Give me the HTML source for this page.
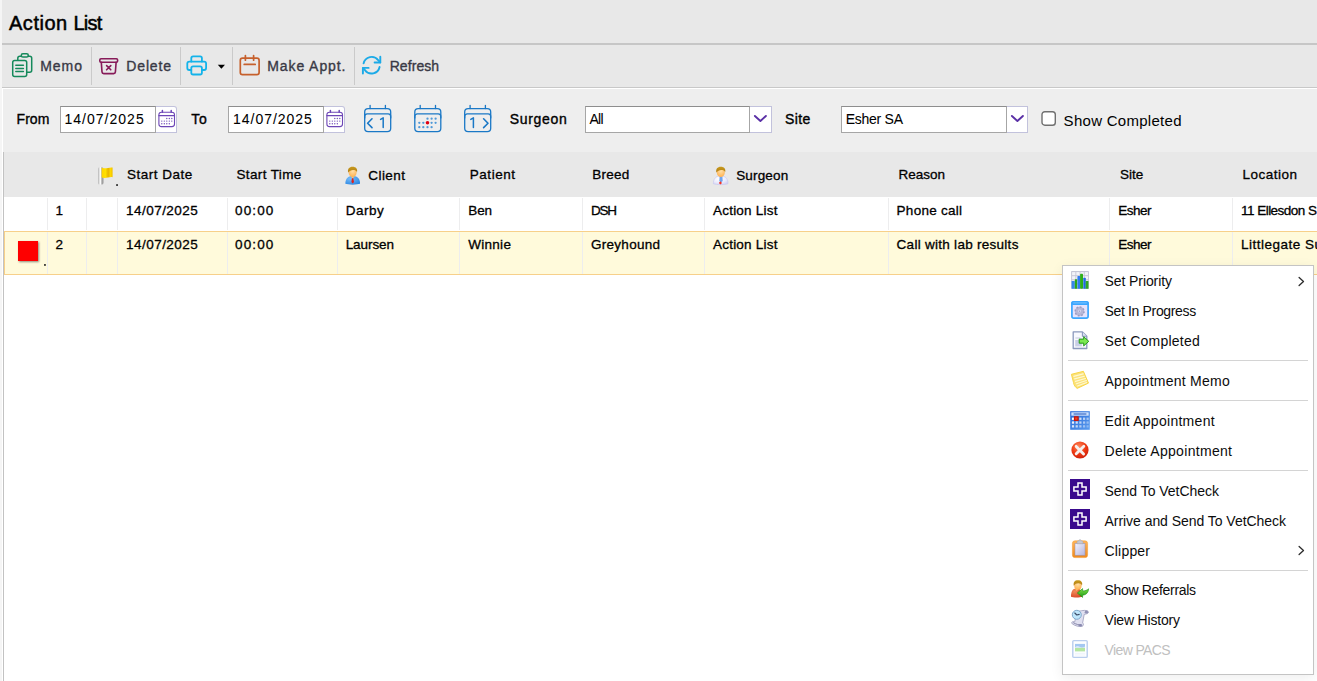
<!DOCTYPE html>
<html lang="en"><head><meta charset="utf-8"><title>Action List</title>
<style>
html,body{margin:0;padding:0}
body{width:1317px;height:681px;overflow:hidden;position:relative;background:#f5f5f5;font-family:"Liberation Sans",sans-serif;color:#000}
.a{position:absolute}
.t{position:absolute;white-space:nowrap;line-height:1;color:#000}
.ttl{-webkit-text-stroke:.5px #000}
.tb{color:#393945;-webkit-text-stroke:.35px #393945}
.lb{-webkit-text-stroke:.35px #000}
.in{-webkit-text-stroke:.05px #000}
.th,.td{-webkit-text-stroke:.3px #000}
.mi{color:#0c0c0c}
.dis{color:#c0c0c0}
#title{left:2px;top:0;width:1315px;height:43px;background:#e8e8e8}
#l1{left:2px;top:43px;width:1315px;height:2px;background:#c6c6c6}
#tbar{left:2px;top:45px;width:1315px;height:42px;background:#e8e8e8}
#l2{left:2px;top:87px;width:1315px;height:1px;background:#c8c8c8}
#wl{left:2px;top:88px;width:1315px;height:593px;background:#fff}
#filt{left:3px;top:89px;width:1314px;height:63px;background:#eeeeee}
#vline{left:3px;top:152px;width:1px;height:529px;background:#c2c2c2}
#grid{left:4px;top:152px;width:1313px;height:529px;background:#fff}
#hdr{left:4px;top:152px;width:1313px;height:45px;background:#e8e8e8}
#sel{left:4px;top:231px;width:1312px;height:42px;background:#fffadb;border:1px solid #f7d08a;border-right:none}
.sep{position:absolute;top:47px;width:1px;height:38px;background:#cacaca}
.cb{position:absolute;width:1px;background:#ededee}
.inp{position:absolute;top:106px;height:25px;background:#fff;border:1px solid #a6a6a6;border-top-color:#8e8e8e;box-sizing:content-box}
.btn{position:absolute;top:106px;height:25px;border:1px solid #c2c2dc;border-left:none;box-sizing:content-box}
#menu{left:1062px;top:265px;width:250px;height:408px;background:#fff;border:1px solid #c4c4c4;box-shadow:0 3px 12px rgba(0,0,0,.07)}
.ms{position:absolute;left:1068px;width:240px;height:1px;background:#d4d4d4}
svg{position:absolute;overflow:visible}

</style></head><body>
<div id="title" class="a"></div>
<div id="l1" class="a"></div>
<div id="tbar" class="a"></div>
<div id="l2" class="a"></div>
<div id="wl" class="a"></div>
<div id="filt" class="a"></div>
<div id="grid" class="a"></div>
<div id="hdr" class="a"></div>
<div id="sel" class="a"></div>
<div id="vline" class="a"></div>
<div class="sep" style="left:91px"></div>
<div class="sep" style="left:180px"></div>
<div class="sep" style="left:232px"></div>
<div class="sep" style="left:354px"></div>
<!-- column borders -->
<div class="cb" style="left:47px;top:198px;height:32px"></div>
<div class="cb" style="left:86px;top:198px;height:32px"></div>
<div class="cb" style="left:117px;top:198px;height:32px"></div>
<div class="cb" style="left:227px;top:198px;height:32px"></div>
<div class="cb" style="left:337px;top:198px;height:32px"></div>
<div class="cb" style="left:459px;top:198px;height:32px"></div>
<div class="cb" style="left:582px;top:198px;height:32px"></div>
<div class="cb" style="left:704px;top:198px;height:32px"></div>
<div class="cb" style="left:888px;top:198px;height:32px"></div>
<div class="cb" style="left:1109px;top:198px;height:32px"></div>
<div class="cb" style="left:1232px;top:198px;height:32px"></div>
<div class="cb" style="left:47px;top:232px;height:42px"></div>
<div class="cb" style="left:86px;top:232px;height:42px"></div>
<div class="cb" style="left:117px;top:232px;height:42px"></div>
<div class="cb" style="left:227px;top:232px;height:42px"></div>
<div class="cb" style="left:337px;top:232px;height:42px"></div>
<div class="cb" style="left:459px;top:232px;height:42px"></div>
<div class="cb" style="left:582px;top:232px;height:42px"></div>
<div class="cb" style="left:704px;top:232px;height:42px"></div>
<div class="cb" style="left:888px;top:232px;height:42px"></div>
<div class="cb" style="left:1109px;top:232px;height:42px"></div>
<div class="cb" style="left:1232px;top:232px;height:42px"></div>
<!-- red square -->
<div class="a" style="left:18px;top:241px;width:20px;height:20px;background:#fe0000;box-shadow:1px 1px 2px rgba(0,0,0,.45)"></div>
<svg style="left:43px;top:263px" width="4" height="4"><rect x="1.1" y="1.1" width="1.7" height="1.7" fill="#1a1a1a"/></svg>
<svg style="left:115px;top:183px" width="4" height="4"><rect x="1.2" y="1.2" width="1.7" height="1.7" fill="#1a1a1a"/></svg>
<!-- inputs -->
<div class="inp" style="left:60px;width:94px"></div>
<div class="btn" style="left:156px;width:20px;background:#fff;border-top-right-radius:3px"></div>
<div class="inp" style="left:228px;width:94px"></div>
<div class="btn" style="left:324px;width:20px;background:#fff;border-top-right-radius:3px"></div>
<div class="inp" style="left:585px;width:163px"></div>
<div class="btn" style="left:750px;width:20.5px;background:#fff"></div>
<div class="inp" style="left:841px;width:164px"></div>
<div class="btn" style="left:1007px;width:20px;background:#fff"></div>
<svg style="left:1040px;top:110px" width="18" height="18" viewBox="0 0 18 18"><rect x="2" y="1.7" width="13.3" height="13.5" rx="2.8" fill="#fff" stroke="#707070" stroke-width="1.4"/></svg>
<!-- menu -->
<div id="menu" class="a"></div>
<div class="ms" style="top:360px"></div>
<div class="ms" style="top:400px"></div>
<div class="ms" style="top:470px"></div>
<div class="ms" style="top:570px"></div>
<!-- toolbar icons -->
<svg style="left:11px;top:52px" width="23" height="26" viewBox="11 52 23 26" fill="none" stroke="#15895b" stroke-width="1.5" stroke-linejoin="round" stroke-linecap="round">
<path d="M21.5 56.2h-1.7a2 2 0 0 0-2 2v1.6M28 56.2h1.7a2 2 0 0 1 2 2v12a2 2 0 0 1-2 2h-2.5"/>
<rect x="21.3" y="53.7" width="7" height="3.4" rx="1.6"/>
<rect x="12.7" y="60.5" width="14" height="16" rx="2"/>
<path d="M15.8 65.3h7.6M15.8 68.5h7.6M15.8 71.6h7.6"/>
</svg>
<svg style="left:98px;top:56px" width="22" height="20" viewBox="98 56 22 20" fill="none" stroke="#871b59" stroke-width="1.6" stroke-linejoin="round" stroke-linecap="round">
<rect x="99.8" y="58.8" width="17.8" height="3.4" rx="1.2"/>
<path d="M101.3 62.4l.7 9.5a1.8 1.8 0 0 0 1.8 1.7h9.8a1.8 1.8 0 0 0 1.8-1.7l.7-9.5"/>
<path d="M106.6 65.6l4.2 4.2M110.8 65.6l-4.2 4.2"/>
</svg>
<svg style="left:185px;top:54px" width="24" height="23" viewBox="185 54 24 23" fill="none" stroke="#14b3ea" stroke-width="1.8" stroke-linejoin="round" stroke-linecap="round">
<path d="M191.3 61.6v-3.4a1.8 1.8 0 0 1 1.8-1.8h7a1.8 1.8 0 0 1 1.8 1.8v3.4"/>
<path d="M191.3 70h-2a2 2 0 0 1-2-2v-4.4a2 2 0 0 1 2-2h14.8a2 2 0 0 1 2 2v4.4a2 2 0 0 1-2 2h-2"/>
<rect x="191.3" y="66.3" width="10.6" height="8.2" rx="1.8"/>
</svg>
<svg style="left:217px;top:64px" width="9" height="6" viewBox="0 0 9 6"><path d="M.8.8h7.2L4.4 4.8z" fill="#000"/></svg>
<svg style="left:238px;top:54px" width="23" height="23" viewBox="238 54 23 23" fill="none" stroke="#c6602c" stroke-width="1.7" stroke-linejoin="round" stroke-linecap="round">
<rect x="240.3" y="58.2" width="18.8" height="16.4" rx="2.2"/>
<path d="M245.4 55.6v4.6M253.6 55.6v4.6M244.2 64.4h11"/>
</svg>
<svg style="left:361px;top:55px" width="21" height="21" viewBox="361 55 21 21" fill="none" stroke="#1caae7" stroke-width="1.9" stroke-linejoin="round" stroke-linecap="round">
<path d="M363.6 63.4a8.2 8.2 0 0 1 14.6-3.2l2 2.2"/>
<path d="M380.3 56.8v5.7h-5.7"/>
<path d="M379.6 67a8.2 8.2 0 0 1-14.6 3.2l-2-2.2"/>
<path d="M362.9 73.6v-5.7h5.7"/>
</svg>
<!-- small purple calendars -->
<svg style="left:158px;top:109.7px" width="18" height="18" viewBox="0 0 18 18" fill="none" stroke="#6d46b6" stroke-width="1.1" stroke-linecap="round">
<rect x=".9" y="2.2" width="15.6" height="14.4" rx="2.6"/><path d="M.9 5.6h15.6" stroke-width="1.2"/><path d="M4.4.6v1.6M13.2.6v1.6" stroke-width="1.5"/>
<path d="M3.8 11.1h0M6.3 11.1h0M8.8 11.1h0M11.3 11.1h0M13.8 11.1h0M3.8 13.7h0M6.3 13.7h0M8.8 13.7h0M11.3 13.7h0M8.8 8.5h0M11.3 8.5h0M13.8 8.5h0" stroke-width="1.35"/>
</svg>
<svg style="left:326.3px;top:109.7px" width="18" height="18" viewBox="0 0 18 18" fill="none" stroke="#6d46b6" stroke-width="1.1" stroke-linecap="round">
<rect x=".9" y="2.2" width="15.6" height="14.4" rx="2.6"/><path d="M.9 5.6h15.6" stroke-width="1.2"/><path d="M4.4.6v1.6M13.2.6v1.6" stroke-width="1.5"/>
<path d="M3.8 11.1h0M6.3 11.1h0M8.8 11.1h0M11.3 11.1h0M13.8 11.1h0M3.8 13.7h0M6.3 13.7h0M8.8 13.7h0M11.3 13.7h0M8.8 8.5h0M11.3 8.5h0M13.8 8.5h0" stroke-width="1.35"/>
</svg>
<!-- nav calendars -->
<svg style="left:363px;top:104px" width="30" height="29" viewBox="363 104 30 29" fill="none" stroke="#1a78c6" stroke-width="1.3" stroke-linecap="round" stroke-linejoin="round">
<rect x="364.7" y="108.6" width="26" height="23" rx="3.4"/><path d="M364.7 117.9v-1.4a2.6 2.6 0 0 1 2.6-2.6h20.8a2.6 2.6 0 0 1 2.6 2.6v1.4M370.1 105.3v3.3M385.4 105.3v3.3"/>
<path d="M372 118.8l-4.4 4.4 4.4 4.4" stroke-width="1.6"/><path d="M380.6 119.4l2.6-1.6v9.8" stroke-width="1.5"/>
</svg>
<svg style="left:413px;top:104px" width="30" height="29" viewBox="413 104 30 29" fill="none" stroke="#1a78c6" stroke-width="1.3" stroke-linecap="round" stroke-linejoin="round">
<rect x="414.8" y="108.6" width="26" height="23" rx="3.4"/><path d="M414.8 117.9v-1.4a2.6 2.6 0 0 1 2.6-2.6h20.8a2.6 2.6 0 0 1 2.6 2.6v1.4M420.2 105.3v3.3M435.5 105.3v3.3"/>
<g stroke="none" fill="#4f99d8"><circle cx="427.5" cy="118.7" r="1.15"/><circle cx="431.6" cy="118.7" r="1.15"/><circle cx="435.6" cy="118.7" r="1.15"/>
<circle cx="419.3" cy="122.8" r="1.15"/><circle cx="423.3" cy="122.8" r="1.15"/><circle cx="431.6" cy="122.8" r="1.15"/><circle cx="435.6" cy="122.8" r="1.15"/>
<circle cx="419.3" cy="127.2" r="1.15"/><circle cx="423.3" cy="127.2" r="1.15"/><circle cx="427.5" cy="127.2" r="1.15"/><circle cx="431.6" cy="127.2" r="1.15"/>
<circle cx="427.5" cy="122.8" r="1.8" fill="#e00012"/></g>
</svg>
<svg style="left:463px;top:104px" width="30" height="29" viewBox="463 104 30 29" fill="none" stroke="#1a78c6" stroke-width="1.3" stroke-linecap="round" stroke-linejoin="round">
<rect x="464.7" y="108.6" width="26" height="23" rx="3.4"/><path d="M464.7 117.9v-1.4a2.6 2.6 0 0 1 2.6-2.6h20.8a2.6 2.6 0 0 1 2.6 2.6v1.4M470.1 105.3v3.3M485.4 105.3v3.3"/>
<path d="M483.6 118.8l4.4 4.4-4.4 4.4" stroke-width="1.6"/><path d="M470.8 119.4l2.6-1.6v9.8" stroke-width="1.5"/>
</svg>
<!-- combo chevrons -->
<svg style="left:753px;top:114px" width="15" height="9" viewBox="0 0 15 9" fill="none" stroke="#5a30a6" stroke-width="1.9" stroke-linecap="round" stroke-linejoin="round"><path d="M1.9 2l5.5 5 5.5-5"/></svg>
<svg style="left:1010px;top:114px" width="15" height="9" viewBox="0 0 15 9" fill="none" stroke="#5a30a6" stroke-width="1.9" stroke-linecap="round" stroke-linejoin="round"><path d="M1.9 2l5.5 5 5.5-5"/></svg>
<svg width="0" height="0" style="left:0;top:0"><defs>
<linearGradient id="gPole" x1="0" x2="1" y1="0" y2="0"><stop offset="0" stop-color="#b4b4b4"/><stop offset=".25" stop-color="#dedede"/><stop offset=".45" stop-color="#ffffff"/><stop offset=".62" stop-color="#c4c4c4"/><stop offset="1" stop-color="#858585"/></linearGradient>
<linearGradient id="gFlag" x1="0" x2="1" y1="0" y2="0"><stop offset="0" stop-color="#ffd200"/><stop offset=".35" stop-color="#ffe100"/><stop offset=".6" stop-color="#e8b400"/><stop offset=".8" stop-color="#ffd800"/><stop offset="1" stop-color="#f0c000"/></linearGradient>
<radialGradient id="gFace" cx=".5" cy=".35" r=".7"><stop offset="0" stop-color="#ffe0a8"/><stop offset="1" stop-color="#ffae4a"/></radialGradient>
<linearGradient id="gHair" x1="0" x2="0" y1="0" y2="1"><stop offset="0" stop-color="#c89a1e"/><stop offset="1" stop-color="#b07d12"/></linearGradient>
<radialGradient id="gBlue" cx=".35" cy=".3" r=".9"><stop offset="0" stop-color="#78bcf8"/><stop offset="1" stop-color="#1f7fe0"/></radialGradient>
<radialGradient id="gCoat" cx=".4" cy=".3" r=".9"><stop offset="0" stop-color="#ffffff"/><stop offset=".5" stop-color="#ececfc"/><stop offset="1" stop-color="#c4c4f0"/></radialGradient>
<radialGradient id="gRed" cx=".4" cy=".3" r=".8"><stop offset="0" stop-color="#ff7a5a"/><stop offset=".6" stop-color="#e8231a"/><stop offset="1" stop-color="#b80d0d"/></radialGradient>
<linearGradient id="gOrange" x1="0" x2="0" y1="0" y2="1"><stop offset="0" stop-color="#ffb65c"/><stop offset="1" stop-color="#f08a1e"/></linearGradient>
<linearGradient id="gPaper" x1="0" x2="1" y1="0" y2="1"><stop offset="0" stop-color="#f4f4ff"/><stop offset="1" stop-color="#b4b4dc"/></linearGradient>
<linearGradient id="gGreen" x1="0" x2="0" y1="0" y2="1"><stop offset="0" stop-color="#7fe04a"/><stop offset="1" stop-color="#1e9a14"/></linearGradient>
<radialGradient id="gBody2" cx=".35" cy=".3" r=".9"><stop offset="0" stop-color="#f08a58"/><stop offset="1" stop-color="#d43a1e"/></radialGradient>
</defs></svg>
<!-- flag -->
<svg style="left:97px;top:166px" width="18" height="20" viewBox="97 166 18 20">
<rect x="98" y="167.3" width="5.4" height="17.3" rx="1.6" fill="url(#gPole)"/>
<path d="M101.6 167.8c2.5.7 4.5.6 6.4.2 1.7-.4 3.2-.7 4.6-.4v9.6c-1.4-.3-2.9 0-4.6.4-1.9.4-3.9.7-6.4 0z" fill="url(#gFlag)"/>
</svg>
<!-- client -->
<svg style="left:344px;top:166px" width="18" height="20" viewBox="344 166 18 20">
<path d="M345.4 183.8c-.3-4.2 2.2-7.2 5-7.6h4.6c2.8.4 5.3 3.4 5 7.6-2.4 1.1-12.2 1.1-14.6 0z" fill="url(#gBlue)"/>
<path d="M350.9 176.4l1.7 2.4 1.8-2.4z" fill="#ffc070"/>
<path d="M352 178.2h1.3l.7 3.7-1.3 1.7-1.3-1.7z" fill="#e0201c"/>
<ellipse cx="352.6" cy="172.4" rx="4" ry="4.6" fill="url(#gFace)"/>
<path d="M348.2 172.6c-.9-3.6 1-5.9 4.4-5.9 3.3 0 5.2 2.2 4.4 5.3-.8-1.6-2.2-2.2-4-2.1-1.9 0-3.6.8-4.8 2.7z" fill="url(#gHair)"/>
</svg>
<!-- surgeon -->
<svg style="left:712px;top:166px" width="18" height="20" viewBox="712 166 18 20">
<path d="M713.4 183.8c-.3-4.2 2.2-7.2 5-7.6h4.6c2.8.4 5.3 3.4 5 7.6-2.4 1.1-12.2 1.1-14.6 0z" fill="url(#gCoat)" stroke="#c6c6ec" stroke-width=".6"/>
<path d="M719.6 176.6h2.8l.3 4.4-1.7 1.4-1.7-1.4z" fill="#6fa4ee"/>
<path d="M720.4 181.3l1.6 1.6-1.6 1.6-1.6-1.6z" fill="#f03428"/>
<ellipse cx="720.8" cy="172.4" rx="4" ry="4.6" fill="url(#gFace)"/>
<path d="M716.4 172.6c-.9-3.6 1-5.9 4.4-5.9 3.3 0 5.2 2.2 4.4 5.3-.8-1.6-2.2-2.2-4-2.1-1.9 0-3.6.8-4.8 2.7z" fill="url(#gHair)"/>
</svg>
<!-- menu: chart -->
<svg style="left:1071px;top:271px" width="18" height="18" viewBox="0 0 18 18">
<rect x=".1" y=".1" width="17.8" height="17.8" rx=".6" fill="#c6c6d6"/>
<g fill="#f3f3f9"><rect x="1.1" y="1.1" width="3.3" height="3.1"/><rect x="5.3" y="1.1" width="3.3" height="3.1"/><rect x="9.5" y="1.1" width="3.3" height="3.1"/><rect x="13.7" y="1.1" width="3.3" height="3.1"/><rect x="1.1" y="5.2" width="3.3" height="3.1"/><rect x="5.3" y="5.2" width="3.3" height="3.1"/><rect x="9.5" y="5.2" width="3.3" height="3.1"/><rect x="13.7" y="5.2" width="3.3" height="3.1"/><rect x="1.1" y="9.3" width="3.3" height="3.1"/><rect x="5.3" y="9.3" width="3.3" height="3.1"/><rect x="9.5" y="9.3" width="3.3" height="3.1"/><rect x="13.7" y="9.3" width="3.3" height="3.1"/><rect x="1.1" y="13.4" width="3.3" height="3.1"/><rect x="5.3" y="13.4" width="3.3" height="3.1"/><rect x="9.5" y="13.4" width="3.3" height="3.1"/><rect x="13.7" y="13.4" width="3.3" height="3.1"/></g>
<rect x=".6" y="10" width="3.2" height="7.8" rx=".6" fill="#3586ea"/><rect x="3.8" y="8.3" width="2.4" height="9.5" rx=".6" fill="#2aa617"/>
<rect x="6.4" y="5.1" width="2.8" height="12.7" rx=".6" fill="#2f7df0"/><rect x="9.1" y="2.8" width="2.9" height="15" rx=".8" fill="#2fb019"/>
<rect x="12.3" y="6.7" width="2.5" height="11.1" rx=".6" fill="#1f6ae0"/><rect x="14.7" y="9.9" width="2.8" height="7.9" rx=".6" fill="#30a822"/>
</svg>
<!-- menu: in progress -->
<svg style="left:1071px;top:301px" width="18" height="18" viewBox="0 0 18 18">
<rect x=".9" y=".9" width="16.2" height="16.2" rx="1.8" fill="#e6e3fc" stroke="#3ba6ff" stroke-width="1.7"/>
<rect x=".2" y=".2" width="17.6" height="3.8" rx="1.6" fill="#3ba6ff"/><path d="M2.2 1.9h13.6" stroke="#7cc4ff" stroke-width="1"/>
<circle cx="8.6" cy="10.4" r="4.7" fill="#b6b6d6"/><circle cx="8.6" cy="10.4" r="4.4" fill="none" stroke="#9c9cc2" stroke-width="1.5" stroke-dasharray="1.7 1.7"/><circle cx="8.6" cy="10" r="1.5" fill="#d8d8f0"/><circle cx="8.6" cy="10.2" r=".6" fill="#8c8cb8"/>
</svg>
<!-- menu: completed -->
<svg style="left:1072px;top:331px" width="18" height="19" viewBox="0 0 18 19">
<path d="M1.2.9h9.2l4.4 4.4v12.2h-13.6z" fill="#f8f9fe" stroke="#8b99bd" stroke-width="1.3" stroke-linejoin="round"/>
<path d="M10.4.9v4.4h4.4" fill="#dde3f3" stroke="#8b99bd" stroke-width="1.1" stroke-linejoin="round"/>
<path d="M3.4 7h5" stroke="#c4c8e0" stroke-width="1"/>
<rect x="3.2" y="9" width="6.6" height="6.4" fill="#c9cfe6"/>
<path d="M7.2 8.1h4.5V5.7l5.1 4.6-5.1 4.6v-2.7H7.2z" fill="#7be852" stroke="#18900e" stroke-width=".9" stroke-linejoin="round"/>
</svg>
<!-- menu: memo note -->
<svg style="left:1070px;top:370px" width="20" height="20" viewBox="0 0 20 20">
<path d="M1.4 4.3L13.4 1.3 18.5 13.1 7.2 18.4C5.2 17.2 3.8 15 3.5 12.6z" fill="#fbe27a" stroke="#f7d23c" stroke-width=".9" stroke-linejoin="round"/>
<path d="M3.8 6.4l9.4-2.5M4.6 8.9l9.8-2.7M5.4 11.4l10-2.9M6.4 13.8l10-3.2M7.6 16l9-3.4" stroke="#fef8d2" stroke-width="1.1" fill="none" stroke-linecap="round"/>
</svg>
<!-- menu: edit calendar -->
<svg style="left:1070px;top:411px" width="20" height="19" viewBox="0 0 20 19">
<defs><linearGradient id="gCal" x1="0" y1="0" x2="1" y2="1"><stop offset="0" stop-color="#2465d4"/><stop offset="1" stop-color="#5b9df0"/></linearGradient></defs>
<rect x=".2" y=".2" width="19.6" height="18.6" fill="url(#gCal)"/>
<rect x="1.3" y="1.3" width="17.4" height="3.4" fill="#cfe1fb"/><path d="M3.6 3h12.8" stroke="#2f62c4" stroke-width="1.1"/>
<g fill="#fff"><rect x="1.9" y="6.6" width="2.2" height="2.3" opacity="1.00"/><rect x="9.3" y="6.6" width="2.2" height="2.3" opacity="0.76"/><rect x="13" y="6.6" width="2.2" height="2.3" opacity="0.64"/><rect x="16.5" y="6.6" width="2.2" height="2.3" opacity="0.52"/><rect x="1.9" y="10.4" width="2.2" height="2.3" opacity="0.90"/><rect x="5.6" y="10.4" width="2.2" height="2.3" opacity="0.78"/><rect x="9.3" y="10.4" width="2.2" height="2.3" opacity="0.66"/><rect x="13" y="10.4" width="2.2" height="2.3" opacity="0.54"/><rect x="16.5" y="10.4" width="2.2" height="2.3" opacity="0.42"/><rect x="1.9" y="14.2" width="2.2" height="2.3" opacity="0.80"/><rect x="5.6" y="14.2" width="2.2" height="2.3" opacity="0.68"/><rect x="9.3" y="14.2" width="2.2" height="2.3" opacity="0.56"/><rect x="13" y="14.2" width="2.2" height="2.3" opacity="0.44"/><rect x="16.5" y="14.2" width="2.2" height="2.3" opacity="0.32"/></g>
<rect x="3.9" y="5.2" width="4.8" height="4.8" fill="#c81408"/><rect x="5.2" y="6.5" width="2.2" height="2.2" fill="#f2421c"/>
</svg>
<!-- menu: delete -->
<svg style="left:1071px;top:441px" width="18" height="18" viewBox="0 0 18 18">
<defs><radialGradient id="gRed2" cx=".42" cy=".3" r=".75"><stop offset="0" stop-color="#ff8a5e"/><stop offset=".55" stop-color="#ee3a12"/><stop offset="1" stop-color="#cc1c08"/></radialGradient></defs>
<circle cx="9" cy="9" r="8.6" fill="url(#gRed2)"/>
<path d="M5.2 5.4l7.4 7.6M12.8 5.2l-7.6 7.6" stroke="#f6f0ee" stroke-width="2.9" stroke-linecap="round"/>
</svg>
<!-- menu: vetcheck x2 -->
<svg style="left:1070px;top:479px" width="20" height="20" viewBox="0 0 20 20">
<rect width="20" height="20" fill="#3a0a8e"/>
<path d="M8 3.9h4v4.1h4.1v4h-4.1v4.1h-4v-4.1h-4.1v-4h4.1z" fill="none" stroke="#fff" stroke-width="1.5"/>
</svg>
<svg style="left:1070px;top:509px" width="20" height="20" viewBox="0 0 20 20">
<rect width="20" height="20" fill="#3a0a8e"/>
<path d="M8 3.9h4v4.1h4.1v4h-4.1v4.1h-4v-4.1h-4.1v-4h4.1z" fill="none" stroke="#fff" stroke-width="1.5"/>
</svg>
<!-- menu: clipper -->
<svg style="left:1072px;top:539px" width="16" height="19" viewBox="0 0 16 19">
<rect x=".4" y="1.8" width="15.2" height="16.8" rx="2.6" fill="url(#gOrange)" stroke="#f0982e" stroke-width=".5"/>
<rect x="3" y="4.4" width="10" height="11.8" fill="url(#gPaper)" stroke="#9090b4" stroke-width=".5"/>
<path d="M5 4.8V2.9c0-.6.4-1 1-1h.9c.1-.9.6-1.4 1.1-1.4s1 .5 1.1 1.4H10c.6 0 1 .4 1 1v1.9z" fill="#c8c8d0" stroke="#9a9aa6" stroke-width=".4"/>
</svg>
<!-- menu: referrals -->
<svg style="left:1071px;top:580px" width="19" height="18" viewBox="0 0 19 18">
<path d="M0 16.8c-.2-4.4 1.4-7.6 3.8-8h3.6c2.4.4 3.8 3.6 3.6 8-1.8 1-9.2 1-11 0z" fill="url(#gBody2)"/>
<path d="M4.2 8.9l1.6 2 1.6-2z" fill="#ffc070"/>
<ellipse cx="6.9" cy="5.4" rx="3.7" ry="4.3" fill="url(#gFace)"/>
<path d="M2.8 5.8c-.8-3.6.9-5.6 4.1-5.6s5 2 4.1 5.2c-.7-1.4-2-2.2-3.8-2.1-1.8 0-3.3.8-4.4 2.5z" fill="url(#gHair)"/>
<path d="M6.3 13l5.3-4.4v2.3c2.4.1 4.4-.6 6-2.1-.2 3.6-2.2 6.2-6 6.4v2.2z" fill="url(#gGreen)" stroke="#17920f" stroke-width=".6" stroke-linejoin="round"/>
</svg>
<!-- menu: history -->
<svg style="left:1071px;top:609px" width="19" height="19" viewBox="0 0 19 19">
<path d="M5.4 3.2c3-1.4 7.8-2.2 10.6-1.6 1.6.4 1.8 2.4.4 3l-3.2.8-1.6 8.6c1.2.6 1.2 2.8-.6 3.4-2.8.6-7.2-.6-9.8-2.6-1-.8-.4-2.2 1-2.2l1.6.2z" fill="#e0e0f0" stroke="#9a9aba" stroke-width=".8"/>
<path d="M2.2 13.6c2.6 1.6 6 2.6 8.8 2.4" stroke="#7e7ea2" stroke-width=".9" fill="none"/>
<ellipse cx="15.4" cy="3.2" rx="1.7" ry="1.4" fill="#9292b6"/><ellipse cx="9.2" cy="16.2" rx="1.6" ry="1.3" fill="#8a8ab0"/>
<circle cx="5.8" cy="5.8" r="4.5" fill="#bfe6fb" stroke="#7fa8cc" stroke-width="1"/>
<path d="M3.8 4l2 2 2.4-.6" stroke="#3a4a66" stroke-width="1.1" fill="none" stroke-linecap="round" stroke-linejoin="round"/>
</svg>
<!-- menu: PACS (disabled) -->
<svg style="left:1072px;top:640px" width="16" height="18" viewBox="0 0 16 18">
<rect x=".8" y=".6" width="14.4" height="16.8" rx="1" fill="#fdfeff" stroke="#b9cdee" stroke-width="1.4"/>
<rect x="3" y="3.9" width="10" height="4.2" fill="#a4c8f2"/><rect x="3" y="7.6" width="10" height="3.8" fill="#b4e6a2"/>
<path d="M3 7.2c1.6-1.4 3.2-1.5 4.6-.5s3 1.2 5.4-.2v1.6h-10z" fill="#dfeafa" opacity=".85"/>
<path d="M3 13.4h10M3 15h10" stroke="#e9f0fb" stroke-width=".7"/>
</svg>
<!-- submenu arrows -->
<svg style="left:1297px;top:276px" width="9" height="11" viewBox="0 0 9 11" fill="none" stroke="#2c2c2c" stroke-width="1.3" stroke-linecap="round" stroke-linejoin="round"><path d="M2.1 1.4l4.4 4.1-4.4 4.1"/></svg>
<svg style="left:1297px;top:545.1px" width="9" height="11" viewBox="0 0 9 11" fill="none" stroke="#2c2c2c" stroke-width="1.3" stroke-linecap="round" stroke-linejoin="round"><path d="M2.1 1.4l4.4 4.1-4.4 4.1"/></svg>

<span id="t0" class="t ttl" style="left:9.0px;top:13.07px;font-size:20px;letter-spacing:0.521px">Action</span>
<span id="t1" class="t ttl" style="left:73.4px;top:13.07px;font-size:20px;letter-spacing:-0.742px">List</span>
<span id="t2" class="t tb" style="left:40.2px;top:58.65px;font-size:14px;letter-spacing:0.965px">Memo</span>
<span id="t3" class="t tb" style="left:126.3px;top:58.65px;font-size:14px;letter-spacing:0.846px">Delete</span>
<span id="t4" class="t tb" style="left:267.2px;top:58.65px;font-size:14px;letter-spacing:0.917px">Make Appt.</span>
<span id="t5" class="t tb" style="left:389.7px;top:58.65px;font-size:14px;letter-spacing:0.061px">Refresh</span>
<span id="t6" class="t lb" style="left:16.5px;top:112.15px;font-size:14px;letter-spacing:0.076px">From</span>
<span id="t7" class="t lb" style="left:191.2px;top:112.15px;font-size:14px;letter-spacing:0.703px">To</span>
<span id="t8" class="t lb" style="left:509.7px;top:112.15px;font-size:14px;letter-spacing:0.677px">Surgeon</span>
<span id="t9" class="t lb" style="left:784.9px;top:112.15px;font-size:14px;letter-spacing:0.458px">Site</span>
<span id="t10" class="t ck" style="left:1063.6px;top:113.30px;font-size:15px;letter-spacing:0.282px">Show Completed</span>
<span id="t11" class="t in" style="left:64.5px;top:112.15px;font-size:14px;letter-spacing:1.014px">14/07/2025</span>
<span id="t12" class="t in" style="left:233.1px;top:112.15px;font-size:14px;letter-spacing:0.969px">14/07/2025</span>
<span id="t13" class="t in" style="left:589.4px;top:112.15px;font-size:14px;letter-spacing:-0.631px">All</span>
<span id="t14" class="t in" style="left:845.8px;top:112.15px;font-size:14px;letter-spacing:-0.277px">Esher SA</span>
<span id="t15" class="t th" style="left:127.0px;top:167.57px;font-size:13.5px;letter-spacing:0.502px">Start Date</span>
<span id="t16" class="t th" style="left:236.4px;top:167.57px;font-size:13.5px;letter-spacing:0.376px">Start Time</span>
<span id="t17" class="t th" style="left:368.3px;top:168.57px;font-size:13.5px;letter-spacing:0.417px">Client</span>
<span id="t18" class="t th" style="left:469.7px;top:167.57px;font-size:13.5px;letter-spacing:0.561px">Patient</span>
<span id="t19" class="t th" style="left:592.3px;top:167.57px;font-size:13.5px;letter-spacing:0.242px">Breed</span>
<span id="t20" class="t th" style="left:736.2px;top:168.57px;font-size:13.5px;letter-spacing:0.159px">Surgeon</span>
<span id="t21" class="t th" style="left:898.6px;top:167.57px;font-size:13.5px;letter-spacing:-0.029px">Reason</span>
<span id="t22" class="t th" style="left:1120.0px;top:167.57px;font-size:13.5px;letter-spacing:-0.022px">Site</span>
<span id="t23" class="t th" style="left:1242.4px;top:167.57px;font-size:13.5px;letter-spacing:0.508px">Location</span>
<span id="t24" class="t td" style="left:55.5px;top:203.57px;font-size:13.5px;letter-spacing:0.000px">1</span>
<span id="t25" class="t td" style="left:125.9px;top:203.57px;font-size:13.5px;letter-spacing:0.491px">14/07/2025</span>
<span id="t26" class="t td" style="left:235.0px;top:203.57px;font-size:13.5px;letter-spacing:1.126px">00:00</span>
<span id="t27" class="t td" style="left:345.7px;top:203.57px;font-size:13.5px;letter-spacing:0.496px">Darby</span>
<span id="t28" class="t td" style="left:468.3px;top:203.57px;font-size:13.5px;letter-spacing:-0.166px">Ben</span>
<span id="t29" class="t td" style="left:591.0px;top:203.57px;font-size:13.5px;letter-spacing:-1.258px">DSH</span>
<span id="t30" class="t td" style="left:713.0px;top:203.57px;font-size:13.5px;letter-spacing:0.212px">Action List</span>
<span id="t31" class="t td" style="left:896.6px;top:203.57px;font-size:13.5px;letter-spacing:0.261px">Phone call</span>
<span id="t32" class="t td" style="left:1118.3px;top:203.57px;font-size:13.5px;letter-spacing:-0.495px">Esher</span>
<span id="t33" class="t td" style="left:1241.0px;top:203.57px;font-size:13.5px;letter-spacing:-0.526px">11 Ellesdon S</span>
<span id="t34" class="t td" style="left:55.5px;top:237.57px;font-size:13.5px;letter-spacing:0.000px">2</span>
<span id="t35" class="t td" style="left:125.9px;top:237.57px;font-size:13.5px;letter-spacing:0.491px">14/07/2025</span>
<span id="t36" class="t td" style="left:235.0px;top:237.57px;font-size:13.5px;letter-spacing:1.126px">00:00</span>
<span id="t37" class="t td" style="left:345.7px;top:237.57px;font-size:13.5px;letter-spacing:-0.083px">Laursen</span>
<span id="t38" class="t td" style="left:468.3px;top:237.57px;font-size:13.5px;letter-spacing:0.267px">Winnie</span>
<span id="t39" class="t td" style="left:591.0px;top:237.57px;font-size:13.5px;letter-spacing:0.275px">Greyhound</span>
<span id="t40" class="t td" style="left:713.0px;top:237.57px;font-size:13.5px;letter-spacing:0.212px">Action List</span>
<span id="t41" class="t td" style="left:896.6px;top:237.57px;font-size:13.5px;letter-spacing:0.275px">Call with lab results</span>
<span id="t42" class="t td" style="left:1118.3px;top:237.57px;font-size:13.5px;letter-spacing:-0.495px">Esher</span>
<span id="t43" class="t td" style="left:1241.0px;top:237.57px;font-size:13.5px;letter-spacing:0.500px">Littlegate Su</span>
<span id="t44" class="t mi" style="left:1104.5px;top:274.15px;font-size:14px;letter-spacing:-0.088px">Set Priority</span>
<span id="t45" class="t mi" style="left:1104.5px;top:304.15px;font-size:14px;letter-spacing:-0.343px">Set In Progress</span>
<span id="t46" class="t mi" style="left:1104.5px;top:334.15px;font-size:14px;letter-spacing:0.216px">Set Completed</span>
<span id="t47" class="t mi" style="left:1104.5px;top:374.15px;font-size:14px;letter-spacing:0.260px">Appointment Memo</span>
<span id="t48" class="t mi" style="left:1104.5px;top:414.15px;font-size:14px;letter-spacing:0.283px">Edit Appointment</span>
<span id="t49" class="t mi" style="left:1104.5px;top:444.15px;font-size:14px;letter-spacing:0.312px">Delete Appointment</span>
<span id="t50" class="t mi" style="left:1104.5px;top:484.15px;font-size:14px;letter-spacing:-0.029px">Send To VetCheck</span>
<span id="t51" class="t mi" style="left:1104.5px;top:514.15px;font-size:14px;letter-spacing:-0.044px">Arrive and Send To VetCheck</span>
<span id="t52" class="t mi" style="left:1104.5px;top:544.15px;font-size:14px;letter-spacing:0.190px">Clipper</span>
<span id="t53" class="t mi" style="left:1104.5px;top:582.55px;font-size:14px;letter-spacing:-0.323px">Show Referrals</span>
<span id="t54" class="t mi" style="left:1104.5px;top:612.65px;font-size:14px;letter-spacing:-0.186px">View History</span>
<span id="t55" class="t mi dis" style="left:1104.5px;top:642.85px;font-size:14px;letter-spacing:-0.610px">View PACS</span>
</body></html>
